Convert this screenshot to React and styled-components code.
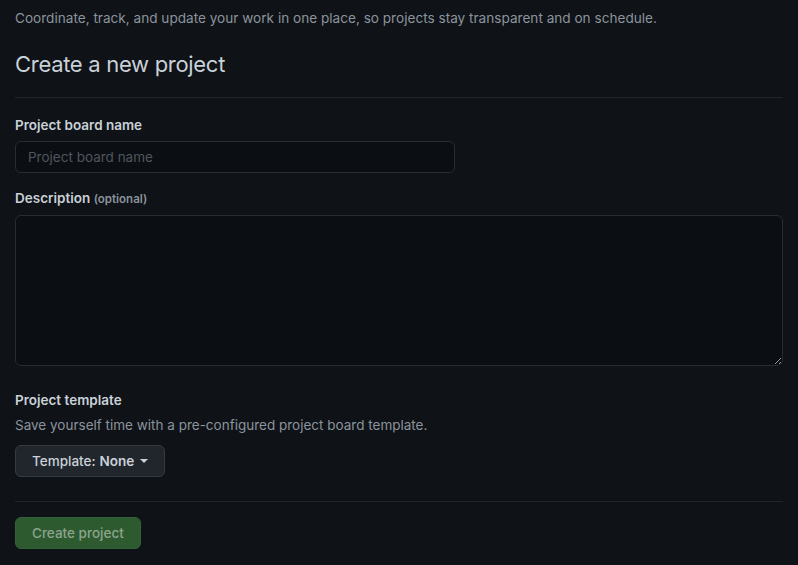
import React, { useState } from 'react'
import styled, { createGlobalStyle } from 'styled-components'

const GlobalStyle = createGlobalStyle`
  html, body {
    margin: 0;
    background: #0f1216;
  }
  body {
    font-family: Inter, "Noto Sans", "Liberation Sans", sans-serif;
    color: #c9d1d9;
  }
`

const Page = styled.div`
  padding: 8px 15px 16px;
  min-height: 565px;
  box-sizing: border-box;
`

const Lead = styled.p`
  margin: 0;
  font-size: 13.6px;
  line-height: 21px;
  color: #8b949e;
`

const Subhead = styled.div`
  margin-top: 20px;
  padding-bottom: 18px;
  border-bottom: 1px solid #22262c;
  > h2 {
    margin: 0;
    font-size: 22px;
    font-weight: 400;
    letter-spacing: -0.3px;
    line-height: 30px;
    color: #c9d1d9;
  }
`

const Form = styled.form`
  display: flex;
  flex-direction: column;
`

const Group = styled.div`
  display: flex;
  flex-direction: column;
  margin-top: ${p => p.$top || 17}px;
`

const Label = styled.label`
  font-size: 13.5px;
  font-weight: 600;
  line-height: 21px;
  color: #c9d1d9;
  margin-bottom: ${p => p.$gap || 5}px;
  > span {
    font-size: 11.5px;
    color: #8b949e;
  }
`

const Note = styled.p`
  margin: 0 0 9px;
  font-size: 13.5px;
  line-height: 21px;
  color: #8b949e;
`

const Input = styled.input`
  width: 440px;
  height: 32px;
  box-sizing: border-box;
  padding: 5px 12px;
  font: inherit;
  font-size: 13.5px;
  color: #c9d1d9;
  background: #0b0e12;
  border: 1px solid #282c33;
  border-radius: 6px;
  outline: none;
  &::placeholder {
    color: #50565e;
  }
`

const TextArea = styled.textarea`
  display: block;
  width: 100%;
  height: 151px;
  box-sizing: border-box;
  padding: 8px 12px;
  font: inherit;
  font-size: 13.5px;
  color: #c9d1d9;
  background: #0b0e12;
  border: 1px solid #282c33;
  border-radius: 6px;
  outline: none;
  resize: vertical;
`

const Button = styled.button`
  align-self: flex-start;
  display: inline-flex;
  align-items: center;
  gap: 4px;
  height: 32px;
  padding: 0 16px;
  font: inherit;
  font-size: 13.5px;
  font-weight: 500;
  border-radius: 6px;
  cursor: pointer;
  color: ${p => (p.$primary ? '#8ba58c' : '#c9d1d9')};
  background: ${p => (p.$primary ? '#2e5a30' : '#21262d')};
  border: 1px solid ${p => (p.$primary ? '#30613a' : '#363b42')};
  > b {
    font-weight: 600;
  }
`

const Caret = styled.span`
  display: inline-block;
  width: 0;
  height: 0;
  margin-left: 2px;
  border-top: 4px solid currentColor;
  border-left: 4px solid transparent;
  border-right: 4px solid transparent;
`

const Divider = styled.hr`
  margin: 24px 0 15px;
  border: 0;
  border-top: 1px solid #22262c;
`

export default function App() {
  const [name, setName] = useState('')
  const [desc, setDesc] = useState('')

  return (
    <Page>
      <GlobalStyle />
      <Lead>
        Coordinate, track, and update your work in one place, so projects stay transparent and on schedule.
      </Lead>
      <Subhead>
        <h2>Create a new project</h2>
      </Subhead>
      <Form onSubmit={e => e.preventDefault()}>
        <Group $top={17}>
          <Label htmlFor="name">Project board name</Label>
          <Input
            id="name"
            placeholder="Project board name"
            value={name}
            onChange={e => setName(e.target.value)}
          />
        </Group>
        <Group $top={15}>
          <Label htmlFor="desc">
            Description <span>(optional)</span>
          </Label>
          <TextArea id="desc" value={desc} onChange={e => setDesc(e.target.value)} />
        </Group>
        <Group $top={24}>
          <Label $gap={4}>Project template</Label>
          <Note>Save yourself time with a pre-configured project board template.</Note>
          <Button type="button">
            Template: <b>None</b>
            <Caret />
          </Button>
        </Group>
        <Divider />
        <Button $primary disabled={name === ''} type="submit">
          Create project
        </Button>
      </Form>
    </Page>
  )
}
